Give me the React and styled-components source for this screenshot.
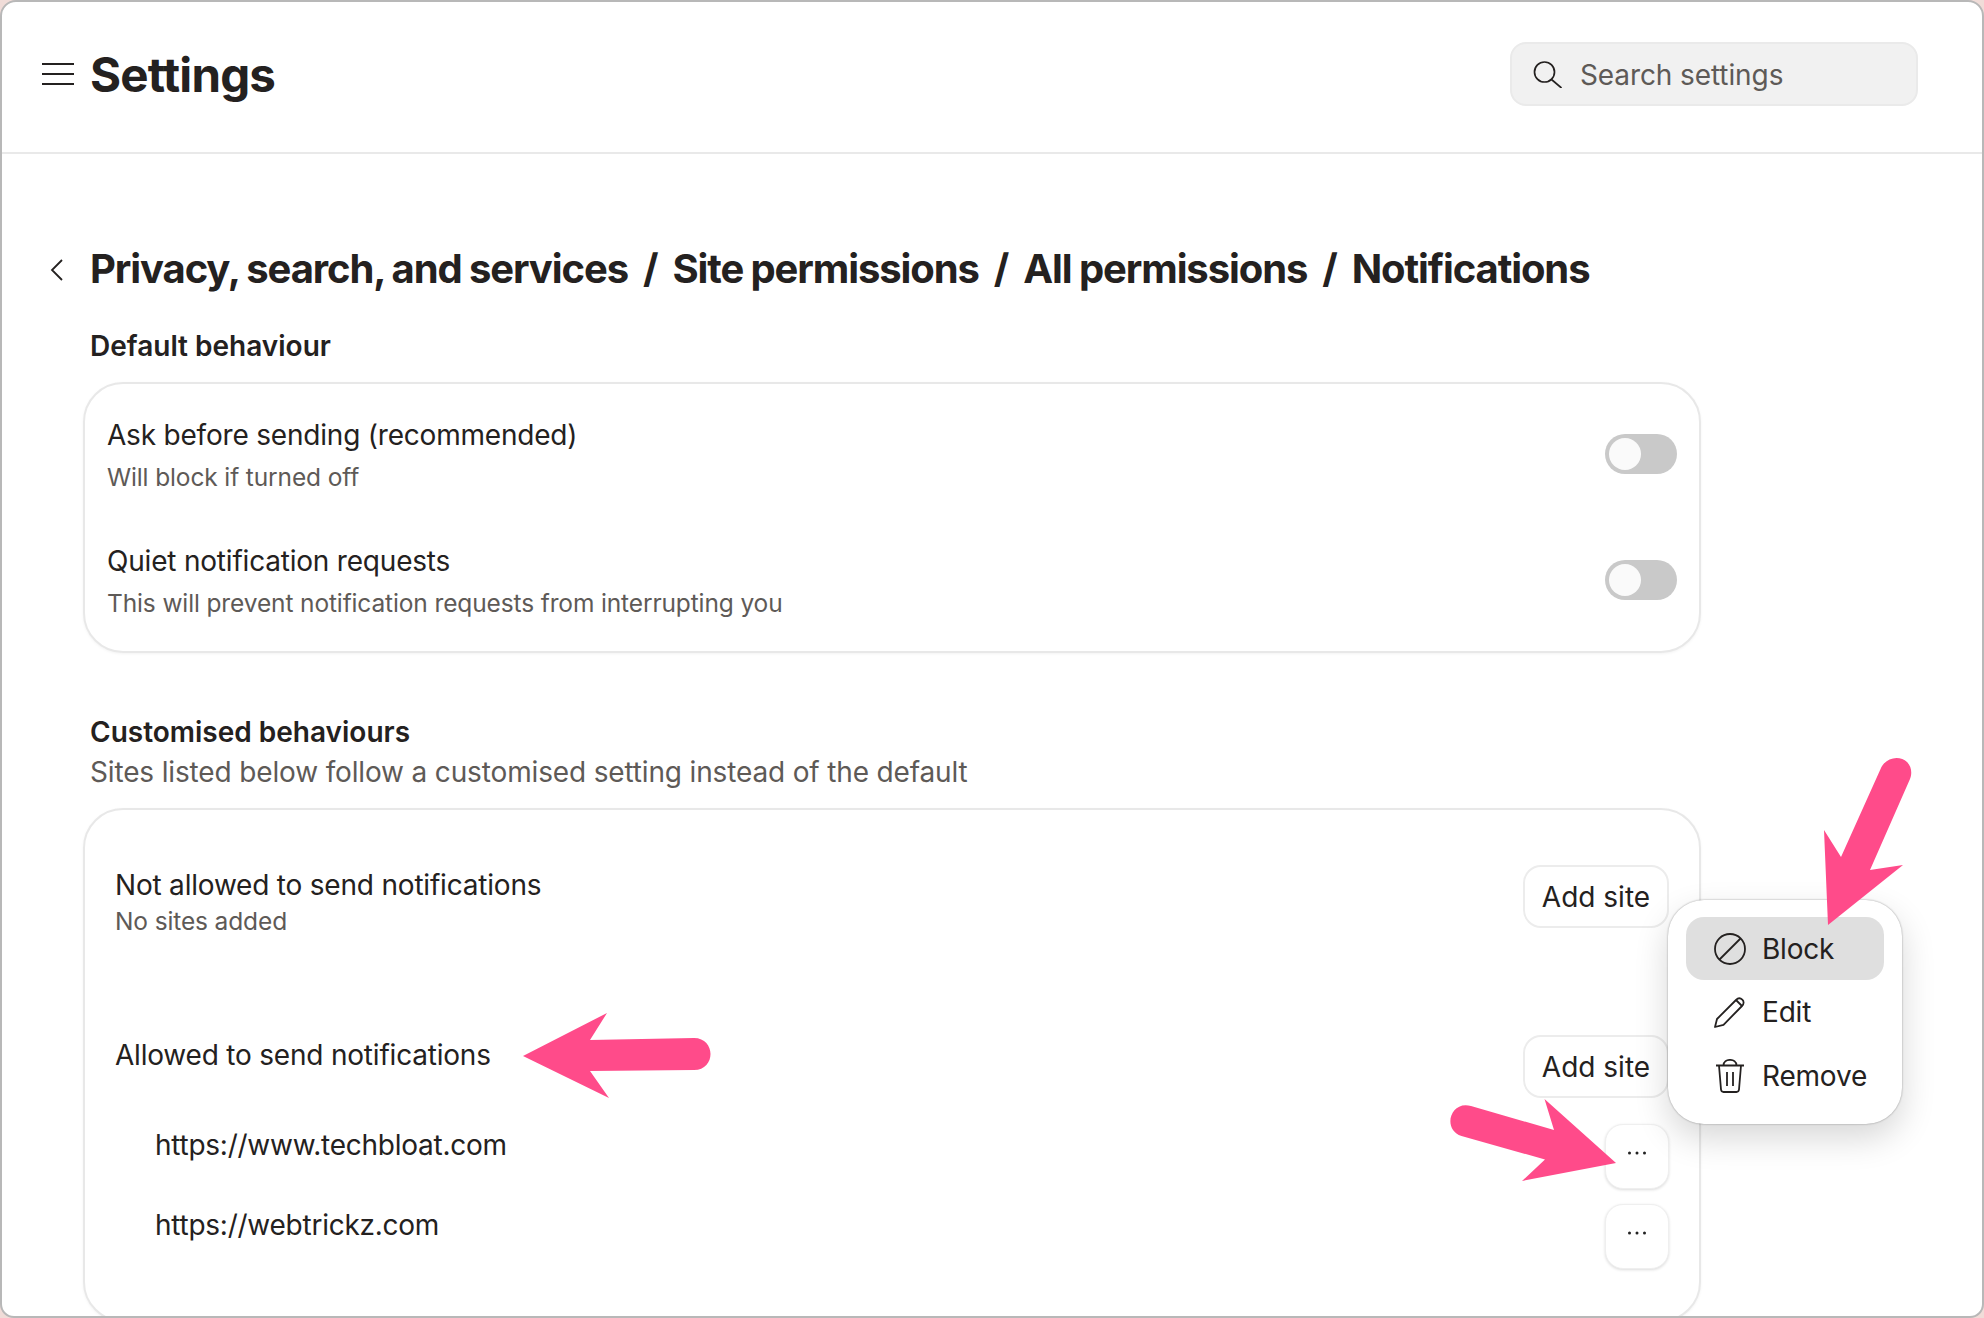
import React from 'react';
import styled, { createGlobalStyle } from 'styled-components';

const GlobalStyle = createGlobalStyle`
  html, body { margin: 0; height: 100%; background: #f0dcd8; }
  #root { height: 100%; }
  * { box-sizing: border-box; }
`;

const Screen = styled.div`
  position: relative;
  width: 1984px;
  height: 1318px;
  overflow: hidden;
  background: #fff;
  border: 2px solid #b8b8b8;
  border-radius: 16px 16px 14px 14px;
  font-family: Inter, "Liberation Sans", sans-serif;
  color: #242120;
`;

const Header = styled.header`
  display: flex;
  align-items: center;
  justify-content: space-between;
  height: 152px;
  padding: 0 64px 6px 40px;
  border-bottom: 2px solid #e9e9e9;
`;

const HeaderLeft = styled.div`
  display: flex;
  align-items: center;
  gap: 16px;
`;

const Title = styled.h1`
  margin: 0;
  font-size: 47.5px;
  font-weight: 700;
  letter-spacing: -0.8px;
  color: #242120;
`;

const SearchBox = styled.div`
  display: flex;
  align-items: center;
  gap: 18px;
  width: 408px;
  height: 64px;
  padding: 0 21px;
  background: #f1f1f1;
  border: 2px solid #eaeaea;
  border-radius: 16px;
  font-size: 28px;
  letter-spacing: -0.1px;
  color: #5e5a57;
`;

const SearchText = styled.span`
  margin-top: 2px;
`;

const Main = styled.main`
  padding: 87px 0 0 82px;
`;

const Crumbs = styled.div`
  display: flex;
  align-items: center;
  height: 54px;
  margin-left: -34px;
  gap: 20px;
  font-size: 40px;
  font-weight: 700;
  letter-spacing: -1.1px;
  word-spacing: -1px;
`;

const BackIcon = styled.svg`
  margin: 3px 6px 0 0;
`;

const Sep = styled.span`
  margin: 0 -5px;
`;

const SectionTitle = styled.h2`
  margin: ${(p) => p.$top}px 0 0;
  padding-left: 6px;
  font-size: 28px;
  font-weight: 600;
  line-height: 36px;
`;

const SectionHint = styled.p`
  margin: 0;
  padding-left: 6px;
  font-size: 28px;
  letter-spacing: -0.15px;
  line-height: 45px;
  color: #5e5a57;
`;

const Card = styled.section`
  width: 1618px;
  min-height: ${(p) => p.$minHeight || 0}px;
  margin: ${(p) => p.$top}px 0 0 -1px;
  padding: ${(p) => p.$padding};
  border: 2px solid #e8e8e8;
  border-radius: 40px;
  background: #fff;
  box-shadow: 0 1px 3px rgba(0, 0, 0, 0.05);
`;

const ToggleRow = styled.div`
  display: flex;
  align-items: center;
  justify-content: space-between;
  height: 126px;
`;

const RowLabel = styled.div`
  font-size: 28px;
  letter-spacing: -0.2px;
  line-height: 40px;
  color: #242120;
`;

const RowHint = styled.div`
  margin-top: ${(p) => (p.$tight ? -4.5 : 2.5)}px;
  font-size: 24.5px;
  letter-spacing: -0.13px;
  line-height: 40px;
  color: #5e5a57;
`;

const Toggle = styled.div`
  display: flex;
  align-items: center;
  width: 72px;
  height: 40px;
  margin-top: -3.5px;
  padding: 0 4px;
  border-radius: 20px;
  background: #c9c9c9;
  &::before {
    content: '';
    width: 32px;
    height: 32px;
    border-radius: 50%;
    background: #fafafa;
  }
`;

const SiteGroup = styled.div`
  display: flex;
  align-items: flex-start;
  justify-content: space-between;
  height: ${(p) => p.$height}px;
`;

const SiteRow = styled.div`
  display: flex;
  align-items: flex-start;
  justify-content: space-between;
  height: 80px;
  padding-left: 40px;
`;

const SiteUrl = styled.span`
  margin-top: 1px;
  font-size: 28px;
  letter-spacing: -0.25px;
  line-height: 40px;
`;

const AddButton = styled.button`
  width: 146px;
  height: 63px;
  padding: 0;
  border: 2px solid #ececec;
  border-radius: 18px;
  background: #fff;
  font: inherit;
  font-size: 28px;
  color: #242120;
`;

const MoreButton = styled.button`
  display: flex;
  align-items: center;
  justify-content: center;
  width: 64px;
  height: 65px;
  padding: 0 0 8px;
  border: 1px solid #efefef;
  border-radius: 18px;
  background: #fff;
  box-shadow: 0 1px 3px rgba(0, 0, 0, 0.14);
`;

const Popup = styled.div`
  position: absolute;
  left: 1666px;
  top: 898px;
  display: flex;
  flex-direction: column;
  gap: 0.5px;
  width: 234px;
  height: 224px;
  padding: 17px 18px;
  background: #fff;
  border-radius: 36px;
  box-shadow: 0 0 2px rgba(0, 0, 0, 0.4), 0 14px 34px rgba(0, 0, 0, 0.16);
`;

const MenuItem = styled.div`
  display: flex;
  align-items: center;
  gap: 16px;
  height: 64px;
  padding: 0 28px;
  border-radius: 18px;
  font-size: 28px;
  letter-spacing: -0.2px;
  color: #242120;
  background: ${(p) => (p.$active ? '#dfdfdf' : 'transparent')};
  & > svg {
    flex-shrink: 0;
  }
`;

const ArrowLayer = styled.svg`
  position: absolute;
  left: -2px;
  top: -2px;
  pointer-events: none;
`;

const Dots = () => (
  <svg width="20" height="6" viewBox="0 0 20 6">
    <circle cx="2.500" cy="3" r="1.500" fill="#222" />
    <circle cx="10" cy="3" r="1.500" fill="#222" />
    <circle cx="17.500" cy="3" r="1.500" fill="#222" />
  </svg>
);

const App = () => (
  <>
    <GlobalStyle />
    <Screen>
      <Header>
        <HeaderLeft>
          <svg width="32" height="22" viewBox="0 0 32 22" stroke="#242120" strokeWidth="2">
            <path d="M0 1h32M0 11h32M0 21h32" />
          </svg>
          <Title>Settings</Title>
        </HeaderLeft>
        <SearchBox>
          <svg width="29" height="27" viewBox="0 0 29 27" fill="none" stroke="#242120" strokeWidth="1.700">
            <circle cx="11.500" cy="11" r="10" />
            <path d="M18.500 18.500L28.500 27" />
          </svg>
          <SearchText>Search settings</SearchText>
        </SearchBox>
      </Header>
      <Main>
        <Crumbs>
          <BackIcon width="14" height="24" viewBox="0 0 14 24" fill="none" stroke="#242120" strokeWidth="1.800">
            <path d="M12 2L2 12l10 10" />
          </BackIcon>
          <span>Privacy, search, and services</span>
          <Sep>/</Sep>
          <span>Site permissions</span>
          <Sep>/</Sep>
          <span>All permissions</span>
          <Sep>/</Sep>
          <span>Notifications</span>
        </Crumbs>
        <SectionTitle $top={33}>Default behaviour</SectionTitle>
        <Card $top={18} $padding="9px 22px 6px 22px">
          <ToggleRow>
            <div>
              <RowLabel>Ask before sending (recommended)</RowLabel>
              <RowHint>Will block if turned off</RowHint>
            </div>
            <Toggle />
          </ToggleRow>
          <ToggleRow>
            <div>
              <RowLabel>Quiet notification requests</RowLabel>
              <RowHint>This will prevent notification requests from interrupting you</RowHint>
            </div>
            <Toggle />
          </ToggleRow>
        </Card>
        <SectionTitle $top={61}>Customised behaviours</SectionTitle>
        <SectionHint>Sites listed below follow a customised setting instead of the default</SectionHint>
        <Card $top={13} $minHeight={514} $padding="55px 30px 0 30px">
          <SiteGroup $height={170}>
            <div>
              <RowLabel>Not allowed to send notifications</RowLabel>
              <RowHint $tight>No sites added</RowHint>
            </div>
            <AddButton>Add site</AddButton>
          </SiteGroup>
          <SiteGroup $height={89}>
            <RowLabel>Allowed to send notifications</RowLabel>
            <AddButton>Add site</AddButton>
          </SiteGroup>
          <SiteRow>
            <SiteUrl>https://www.techbloat.com</SiteUrl>
            <MoreButton><Dots /></MoreButton>
          </SiteRow>
          <SiteRow>
            <SiteUrl>https://webtrickz.com</SiteUrl>
            <MoreButton><Dots /></MoreButton>
          </SiteRow>
        </Card>
      </Main>
      <Popup>
        <MenuItem $active>
          <svg width="32" height="32" viewBox="0 0 32 32" fill="none" stroke="#242120" strokeWidth="1.800">
            <circle cx="16" cy="16" r="15" />
            <path d="M5.500 26.500L26.500 5.500" />
          </svg>
          Block
        </MenuItem>
        <MenuItem>
          <svg width="32" height="32" viewBox="0 0 32 32" fill="none" stroke="#242120" strokeWidth="1.800" strokeLinejoin="round">
            <path d="M1 31l2-8L22 4c2-2 4.500-2 6.300-.3s1.700 4.300-.3 6.300L9.500 28.800z" />
            <path d="M22 4l6 6" />
          </svg>
          Edit
        </MenuItem>
        <MenuItem>
          <svg width="32" height="34" viewBox="0 0 32 34" fill="none" stroke="#242120" strokeWidth="1.800" strokeLinejoin="round">
            <path d="M2 6.500h28M9.500 6.500c0-7.500 13-7.500 13 0M5 6.500l2 24c.2 1.500 1 2.500 2.500 2.500h13c1.500 0 2.300-1 2.500-2.500l2-24M13 13v14M19 13v14" />
          </svg>
          Remove
        </MenuItem>
      </Popup>
      <ArrowLayer width="1984" height="1318" viewBox="0 0 1984 1318" fill="#ff4b8a">
        <path d="M1828 925L1824 830L1841 857L1881 768C1886 757 1900 755 1907 762C1912 767 1912 774 1910 779L1870 870L1903 865Z" />
        <path d="M523 1056L607 1013L590 1040L694 1038C716 1038 716 1070 694 1070L590 1071L609 1098Z" />
        <path d="M1616 1163L1544.500 1099L1554 1130L1471 1106C1450 1100 1442 1130 1461.500 1136L1545 1159.500L1522 1181Z" />
      </ArrowLayer>
    </Screen>
  </>
);

export default App;
